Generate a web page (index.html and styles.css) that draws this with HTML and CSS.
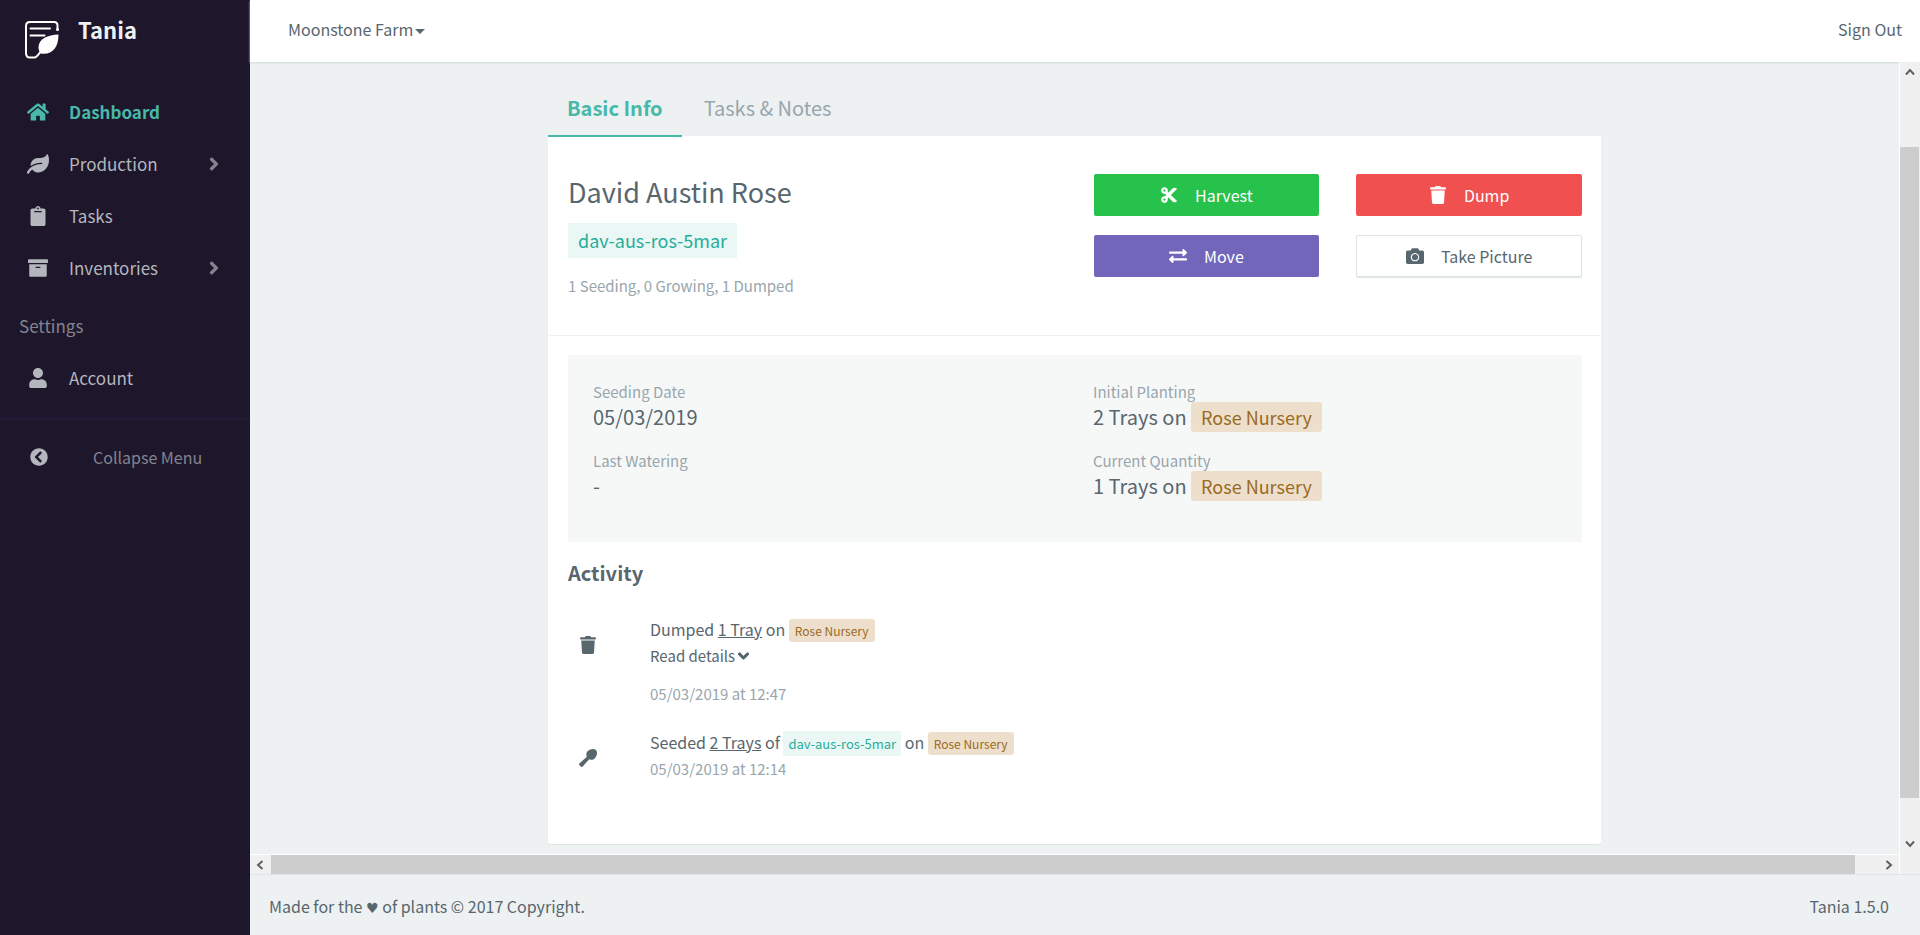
FILE: index.html
```html
<!DOCTYPE html>
<html lang="en">
<head>
<meta charset="utf-8">
<title>Tania</title>
<link rel="stylesheet" href="styles.css">
</head>
<body>
<svg class="sprite" aria-hidden="true">
  <symbol id="home" viewBox="0 0 576 512"><path d="M280.37 148.26L96 300.11V464a16 16 0 0 0 16 16l112.06-.29a16 16 0 0 0 15.92-16V368a16 16 0 0 1 16-16h64a16 16 0 0 1 16 16v95.64a16 16 0 0 0 16 16.05L464 480a16 16 0 0 0 16-16V300L295.67 148.26a12.19 12.19 0 0 0-15.3 0zM571.6 251.47L488 182.56V44.05a12 12 0 0 0-12-12h-56a12 12 0 0 0-12 12v72.61L318.47 43a48 48 0 0 0-61 0L4.34 251.47a12 12 0 0 0-1.6 16.9l25.5 31A12 12 0 0 0 45.15 301l235.22-193.74a12.19 12.19 0 0 1 15.3 0L530.9 301a12 12 0 0 0 16.9-1.6l25.5-31a12 12 0 0 0-1.7-16.93z"/></symbol>
  <symbol id="leaf" viewBox="0 0 576 512"><path d="M546.2 9.7c-5.6-12.5-21.6-13-28.3-1.2C486.9 62.4 431.4 96 368 96h-80C182 96 96 182 96 288c0 7 .8 13.7 1.5 20.5C161.3 262.8 253.4 224 384 224c8.8 0 16 7.200 16 16s-7.200 16-16 16C132.600 256 26 410.100 2.400 468c-6.600 16.300 1.200 34.900 17.500 41.600 16.400 6.800 35-1.100 41.800-17.300 1.500-3.600 20.900-47.900 71.900-90.600 32.400 43.900 94 85.800 174.900 77.200C465.500 467.500 576 326.700 576 154.300c0-50.200-10.800-102.200-29.800-144.600z"/></symbol>
  <symbol id="clipboard" viewBox="0 0 384 512"><path d="M384 112v352c0 26.510-21.490 48-48 48H48c-26.510 0-48-21.490-48-48V112c0-26.510 21.490-48 48-48h80c0-35.290 28.710-64 64-64s64 28.710 64 64h80c26.510 0 48 21.490 48 48zM192 40c-13.255 0-24 10.745-24 24s10.745 24 24 24 24-10.745 24-24-10.745-24-24-24m96 114v-20a6 6 0 0 0-6-6H102a6 6 0 0 0-6 6v20a6 6 0 0 0 6 6h180a6 6 0 0 0 6-6z"/></symbol>
  <symbol id="archive" viewBox="0 0 512 512"><path d="M32 448c0 17.700 14.300 32 32 32h384c17.700 0 32-14.300 32-32V160H32v288zm160-212c0-6.600 5.400-12 12-12h104c6.600 0 12 5.400 12 12v8c0 6.600-5.400 12-12 12H204c-6.600 0-12-5.400-12-12v-8zM480 32H32C14.300 32 0 46.300 0 64v48c0 8.800 7.200 16 16 16h480c8.800 0 16-7.200 16-16V64c0-17.700-14.300-32-32-32z"/></symbol>
  <symbol id="user" viewBox="0 0 448 512"><path d="M224 256c70.700 0 128-57.300 128-128S294.700 0 224 0 96 57.300 96 128s57.300 128 128 128zm89.600 32h-16.700c-22.200 10.200-46.900 16-72.900 16s-50.600-5.800-72.900-16h-16.700C60.200 288 0 348.200 0 422.400V464c0 26.500 21.500 48 48 48h352c26.500 0 48-21.500 48-48v-41.600c0-74.200-60.200-134.400-134.400-134.400z"/></symbol>
  <symbol id="circle-left" viewBox="0 0 512 512"><path d="M256 504C119 504 8 393 8 256S119 8 256 8s248 111 248 248-111 248-248 248zM142.100 273l135.500 135.500c9.400 9.400 24.600 9.400 33.900 0l17-17c9.400-9.400 9.400-24.600 0-33.900L226.900 256l101.600-101.600c9.400-9.400 9.400-24.600 0-33.900l-17-17c-9.400-9.400-24.600-9.400-33.900 0L142.100 239c-9.400 9.400-9.400 24.600 0 34z"/></symbol>
  <symbol id="chevron-right" viewBox="0 0 320 512"><path d="M285.476 272.971L91.132 467.314c-9.373 9.373-24.569 9.373-33.941 0l-22.667-22.667c-9.357-9.357-9.375-24.522-.04-33.901L188.505 256 34.484 101.255c-9.335-9.379-9.317-24.544.04-33.901l22.667-22.667c9.373-9.373 24.569-9.373 33.941 0L285.475 239.030c9.373 9.372 9.373 24.568.001 33.941z"/></symbol>
  <symbol id="chevron-down" viewBox="0 0 448 512"><path d="M207.029 381.476L12.686 187.132c-9.373-9.373-9.373-24.569 0-33.941l22.667-22.667c9.357-9.357 24.522-9.375 33.901-.04L224 284.505l154.745-154.021c9.379-9.335 24.544-9.317 33.901.04l22.667 22.667c9.373 9.373 9.373 24.569 0 33.941L240.971 381.476c-9.373 9.372-24.569 9.372-33.942 0z"/></symbol>
  <symbol id="cut" viewBox="0 0 448 512"><path d="M278.060 256L444.480 89.570c4.690-4.690 4.690-12.290 0-16.970-32.800-32.800-85.990-32.800-118.790 0L210.180 188.120l-24.860-24.860c4.310-10.920 6.680-22.810 6.680-35.260 0-53.020-42.980-96-96-96S0 74.980 0 128s42.980 96 96 96c4.540 0 8.990-.32 13.360-.93L142.290 256l-32.930 32.930c-4.370-.61-8.830-.93-13.360-.93-53.020 0-96 42.980-96 96s42.980 96 96 96 96-42.980 96-96c0-12.450-2.370-24.340-6.680-35.260l24.860-24.860L325.690 439.400c32.800 32.800 85.990 32.800 118.790 0 4.690-4.680 4.690-12.280 0-16.970L278.060 256zM96 160c-17.640 0-32-14.360-32-32s14.360-32 32-32 32 14.360 32 32-14.360 32-32 32zm0 256c-17.640 0-32-14.360-32-32s14.360-32 32-32 32 14.360 32 32-14.360 32-32 32z"/></symbol>
  <symbol id="trash" viewBox="0 0 448 512"><path d="M432 32H312l-9.400-18.700A24 24 0 0 0 281.100 0H166.800a23.720 23.720 0 0 0-21.400 13.300L136 32H16A16 16 0 0 0 0 48v32a16 16 0 0 0 16 16h416a16 16 0 0 0 16-16V48a16 16 0 0 0-16-16zM53.200 467a48 48 0 0 0 47.900 45h245.800a48 48 0 0 0 47.900-45L416 128H32z"/></symbol>
  <symbol id="exchange" viewBox="0 0 512 512"><path d="M0 168v-16c0-13.255 10.745-24 24-24h360V80c0-21.367 25.899-32.042 40.971-16.971l80 80c9.372 9.373 9.372 24.569 0 33.941l-80 80C409.956 271.982 384 261.456 384 240v-48H24c-13.255 0-24-10.745-24-24zm488 152H128v-48c0-21.314-25.862-32.080-40.971-16.971l-80 80c-9.372 9.373-9.372 24.569 0 33.941l80 80C102.057 463.997 128 453.437 128 432v-48h360c13.255 0 24-10.745 24-24v-16c0-13.255-10.745-24-24-24z"/></symbol>
  <symbol id="camera" viewBox="0 0 512 512"><path d="M512 144v288c0 26.500-21.500 48-48 48H48c-26.500 0-48-21.500-48-48V144c0-26.500 21.500-48 48-48h88l12.300-32.900c7-18.700 24.900-31.100 44.900-31.100h125.500c20 0 37.900 12.400 44.900 31.100L376 96h88c26.500 0 48 21.500 48 48zM376 288c0-66.200-53.800-120-120-120s-120 53.800-120 120 53.800 120 120 120 120-53.800 120-120zm-32 0c0 48.500-39.500 88-88 88s-88-39.500-88-88 39.500-88 88-88 88 39.500 88 88z"/></symbol>
  <symbol id="spoon" viewBox="0 0 512 512"><path d="M480.100 31.900c-55-55.100-164.900-34.500-227.800 28.500-49.300 49.300-55.100 110-28.800 160.400L9 413.200c-11.600 10.500-12.100 28.500-1 39.500L59.300 504c11 11 29.100 10.500 39.500-1.100l192.400-214.400c50.400 26.300 111.100 20.500 160.400-28.800 63-62.900 83.600-172.800 28.500-227.800z"/></symbol>
</svg>

<div class="app">
  <aside class="sidebar">
    <a class="brand" href="#">
      <svg class="logo" viewBox="0 0 34 38" aria-hidden="true">
        <path class="logo-line" d="M32.500 8.500V4.500Q32.500 1 29 1H5Q1 1 1 5V32Q1 36.500 5 36.500H9.500Q11 36.500 12 35L16 30.500"/>
        <path class="logo-line" d="M5.500 7.500H25M5.500 14.500H19.500"/>
        <path class="logo-fill" d="M33.500 13.500C23 14 13.500 17.500 13.500 26.500C13.500 29 14.500 31.500 16 32.500C27 34 33.500 27 33.500 13.500Z"/>
        <circle class="logo-fill" cx="32.500" cy="8.500" r="1.500"/>
      </svg>
      <span>Tania</span>
    </a>
    <nav class="nav">
      <a class="nav-item active" href="#"><svg class="nav-icon"><use href="#home"/></svg><span>Dashboard</span></a>
      <a class="nav-item" href="#"><svg class="nav-icon"><use href="#leaf"/></svg><span>Production</span><svg class="nav-arrow"><use href="#chevron-right"/></svg></a>
      <a class="nav-item" href="#"><svg class="nav-icon"><use href="#clipboard"/></svg><span>Tasks</span></a>
      <a class="nav-item" href="#"><svg class="nav-icon"><use href="#archive"/></svg><span>Inventories</span><svg class="nav-arrow"><use href="#chevron-right"/></svg></a>
      <div class="nav-heading">Settings</div>
      <a class="nav-item" href="#"><svg class="nav-icon"><use href="#user"/></svg><span>Account</span></a>
    </nav>
    <button class="collapse" type="button"><svg class="collapse-icon"><use href="#circle-left"/></svg><span>Collapse Menu</span></button>
  </aside>

  <div class="page">
    <header class="topbar">
      <button class="farm" type="button">Moonstone Farm<span class="caret"></span></button>
      <a class="signout" href="#">Sign Out</a>
    </header>

    <div class="viewport">
      <main class="content">
        <div class="container">
          <nav class="tabs">
            <a class="tab active" href="#">Basic Info</a>
            <a class="tab" href="#">Tasks &amp; Notes</a>
          </nav>
          <section class="card">
            <div class="summary">
              <div class="crop">
                <h1 class="crop-name">David Austin Rose</h1>
                <span class="batch">dav-aus-ros-5mar</span>
                <p class="counts">1 Seeding, 0 Growing, 1 Dumped</p>
              </div>
              <div class="actions">
                <button class="btn green" type="button"><svg class="btn-icon"><use href="#cut"/></svg>Harvest</button>
                <button class="btn red" type="button"><svg class="btn-icon"><use href="#trash"/></svg>Dump</button>
                <button class="btn purple" type="button"><svg class="btn-icon"><use href="#exchange"/></svg>Move</button>
                <button class="btn plain" type="button"><svg class="btn-icon"><use href="#camera"/></svg>Take Picture</button>
              </div>
            </div>
            <div class="details">
              <dl class="facts">
                <div class="fact"><dt>Seeding Date</dt><dd>05/03/2019</dd></div>
                <div class="fact"><dt>Initial Planting</dt><dd>2 Trays on <span class="area">Rose Nursery</span></dd></div>
                <div class="fact"><dt>Last Watering</dt><dd>-</dd></div>
                <div class="fact"><dt>Current Quantity</dt><dd>1 Trays on <span class="area">Rose Nursery</span></dd></div>
              </dl>
              <h2 class="activity-title">Activity</h2>
              <ul class="activity">
                <li class="event">
                  <svg class="event-icon"><use href="#trash"/></svg>
                  <div>
                    <p class="event-text">Dumped <u>1 Tray</u> on <span class="area small">Rose Nursery</span></p>
                    <a class="more" href="#">Read details<svg class="more-icon"><use href="#chevron-down"/></svg></a>
                    <p class="time spaced">05/03/2019 at 12:47</p>
                  </div>
                </li>
                <li class="event">
                  <svg class="event-icon"><use href="#spoon"/></svg>
                  <div>
                    <p class="event-text">Seeded <u>2 Trays</u> of <span class="batch small">dav-aus-ros-5mar</span> on <span class="area small">Rose Nursery</span></p>
                    <p class="time">05/03/2019 at 12:14</p>
                  </div>
                </li>
              </ul>
            </div>
          </section>
        </div>
      </main>
      <div class="scroll vertical" aria-hidden="true">
        <svg class="scroll-arrow" viewBox="0 0 10 8"><path d="M1 6.500L5 2L9 6.500"/></svg>
        <div class="track"><div class="thumb"></div></div>
        <svg class="scroll-arrow" viewBox="0 0 10 8"><path d="M1 1.500L5 6L9 1.500"/></svg>
      </div>
      <div class="scroll horizontal" aria-hidden="true">
        <svg class="scroll-arrow" viewBox="0 0 8 10"><path d="M6.500 1L2 5L6.500 9"/></svg>
        <div class="track"><div class="thumb"></div></div>
        <svg class="scroll-arrow" viewBox="0 0 8 10"><path d="M1.500 1L6 5L1.500 9"/></svg>
      </div>
      <div class="scroll-corner"></div>
    </div>

    <footer class="footer">
      <span>Made for the <span class="heart">♥</span> of plants © 2017 Copyright.</span>
      <span>Tania 1.5.0</span>
    </footer>
  </div>
</div>
</body>
</html>
```

FILE: styles.css
```css
* { box-sizing: border-box; }

body {
  margin: 0;
  font-family: "Noto Sans CJK SC", "Noto Sans CJK JP", sans-serif;
  font-size: 16px;
  line-height: 24px;
  color: #58666e;
  background: #edf1f2;
}

h1, h2, p, dl, dd, ul { margin: 0; padding: 0; }
ul { list-style: none; }
a { color: inherit; text-decoration: none; }
button { font: inherit; color: inherit; border: 0; background: none; cursor: pointer; }
svg { fill: currentColor; }
.sprite { display: none; }

.app { display: flex; height: 100vh; }

/* Sidebar */
.sidebar { flex: 0 0 250px; background: #1e162b; color: #b4b6bd; }
.brand { display: flex; gap: 19px; height: 62px; padding: 21px 0 0 25px; font-size: 22px; font-weight: 700; line-height: 16px; color: #edf1f2; }
.logo { width: 34px; height: 38px; }
.logo-line { fill: none; stroke: #fff; stroke-width: 2; stroke-linecap: round; }
.logo-fill { fill: #fff; }
.nav { padding: 24px 0 13px; border-bottom: 3px solid #231a35; font-size: 17px; }
.nav-item { display: flex; align-items: center; height: 52px; padding: 0 30px 0 27px; }
.nav-item.active { color: #48b9a9; font-weight: 700; }
.nav-icon { width: 22px; height: 20px; margin-right: 20px; }
.nav-arrow { width: 12px; height: 14px; margin-left: auto; color: #83848f; stroke: currentColor; stroke-width: 40; }
.nav-heading { height: 58px; padding: 20px 19px 0; line-height: 24px; color: #83848f; }
.collapse { display: flex; align-items: center; gap: 45px; height: 74px; padding: 0 30px; color: #83848f; }
.collapse-icon { width: 18px; height: 18px; color: #b4b6bd; }

/* Page frame */
.page { flex: 1; min-width: 0; display: flex; flex-direction: column; }
.topbar { display: flex; justify-content: space-between; align-items: center; height: 62px; padding: 0 18px 4px 38px; background: #fff; box-shadow: 0 1px 2px #cfd8d8; }
.farm { display: flex; align-items: center; gap: 2px; padding: 0; }
.caret { border: 5px solid transparent; border-top-color: currentColor; border-bottom: 0; margin-top: 4px; }
.viewport { flex: 1; min-height: 0; display: grid; grid-template-columns: minmax(0, 1fr) 21px; grid-template-rows: minmax(0, 1fr) 20px; }
.content { overflow: hidden; }
.footer { display: flex; justify-content: space-between; align-items: center; height: 61px; padding: 2px 31px 0 19px; border-top: 1px solid #dee5e7; }
.heart { font-family: "DejaVu Sans", sans-serif; font-size: 14px; line-height: 16px; }

/* Scroll bars */
.scroll { display: flex; background: #f0f0f0; }
.scroll.vertical { flex-direction: column; border-left: 1px solid #fff; }
.scroll.horizontal { border-top: 1px solid #fff; }
.scroll-corner { background: #f0f0f0; border-left: 1px solid #fff; }
.scroll-arrow { width: 10px; height: 10px; margin: 5px; fill: none; stroke: #606060; stroke-width: 2; }
.track { flex: 1; min-width: 0; min-height: 0; }
.thumb { height: 100%; background: #cdcdcd; }
.vertical .track { padding: 65px 1px 36px 0; }
.horizontal .track { padding: 0 24px 0 1px; }

/* Tabs */
.container { max-width: 1053px; margin: 0 auto; padding-top: 22px; }
.tabs { display: flex; }
.tab { height: 52px; padding: 10px 19px 0 22px; font-size: 20px; line-height: 28px; color: #98a6ad; }
.tab.active { position: relative; height: 53px; margin-bottom: -1px; padding: 10px 19px 0; border-bottom: 2px solid #48b9a9; font-weight: 700; color: #48b9a9; }

/* Card */
.card { padding-bottom: 40px; background: #fff; border-radius: 0 0 3px 3px; box-shadow: 0 1px 1px #dfe4e5; }
.summary { display: grid; grid-template-columns: 1fr 1fr; gap: 37px; margin: 0 1px; padding: 38px 18px 37px 19px; border-bottom: 1px solid #edf1f2; }
.crop-name { font-size: 27px; font-weight: 400; line-height: 36px; }
.batch { display: inline-block; margin-top: 13px; padding: 0 10px; font-size: 18px; line-height: 35px; color: #27ae9b; background: #eaf7f5; }
.counts { margin-top: 16px; font-size: 15px; line-height: 24px; color: #98a6ad; }
.actions { display: grid; grid-template-columns: 1fr 1fr; align-content: start; gap: 19px 37px; }
.btn { display: flex; justify-content: center; align-items: center; height: 42px; gap: 17px; border-radius: 2px; color: #fff; }
.btn-icon { width: 18px; height: 18px; }
.green { background: #27c24c; }
.red { background: #f05050; }
.purple { background: #7266ba; }
.plain { color: #58666e; background: #fff; border: 1px solid #dee5e7; box-shadow: 0 1px 1px #dee5e7; }

.details { padding: 19px 19px 0 20px; }
.facts { display: grid; grid-template-columns: 1fr 1fr; gap: 19px 36px; padding: 25px 25px 43px; background: #f6f8f8; }
.fact dt { font-size: 15px; line-height: 24px; color: #98a6ad; }
.fact dd { font-size: 20px; line-height: 26px; }
.area { padding: 2px 10px; font-size: 18px; color: #9a6a1f; background: #eddfcb; border-radius: 3px; }
.area.small { padding: 3px 6px; font-size: 12px; }
.batch.small { display: inline; padding: 3px 5px; font-size: 13px; line-height: inherit; }
.activity-title { margin-top: 18px; font-size: 20px; line-height: 26px; }
.activity { padding-top: 30px; }
.event { display: grid; grid-template-columns: 82px 1fr; margin-bottom: 23px; }
.event-icon { width: 18px; height: 18px; margin: 20px 0 0 11px; }
.event-text { line-height: 26px; }
.more { display: flex; align-items: center; gap: 3px; font-size: 15px; line-height: 24px; }
.more-icon { width: 11px; height: 12px; stroke: currentColor; stroke-width: 50; }
.time { font-size: 15px; line-height: 24px; color: #98a6ad; }
.time.spaced { margin-top: 14px; }
```
